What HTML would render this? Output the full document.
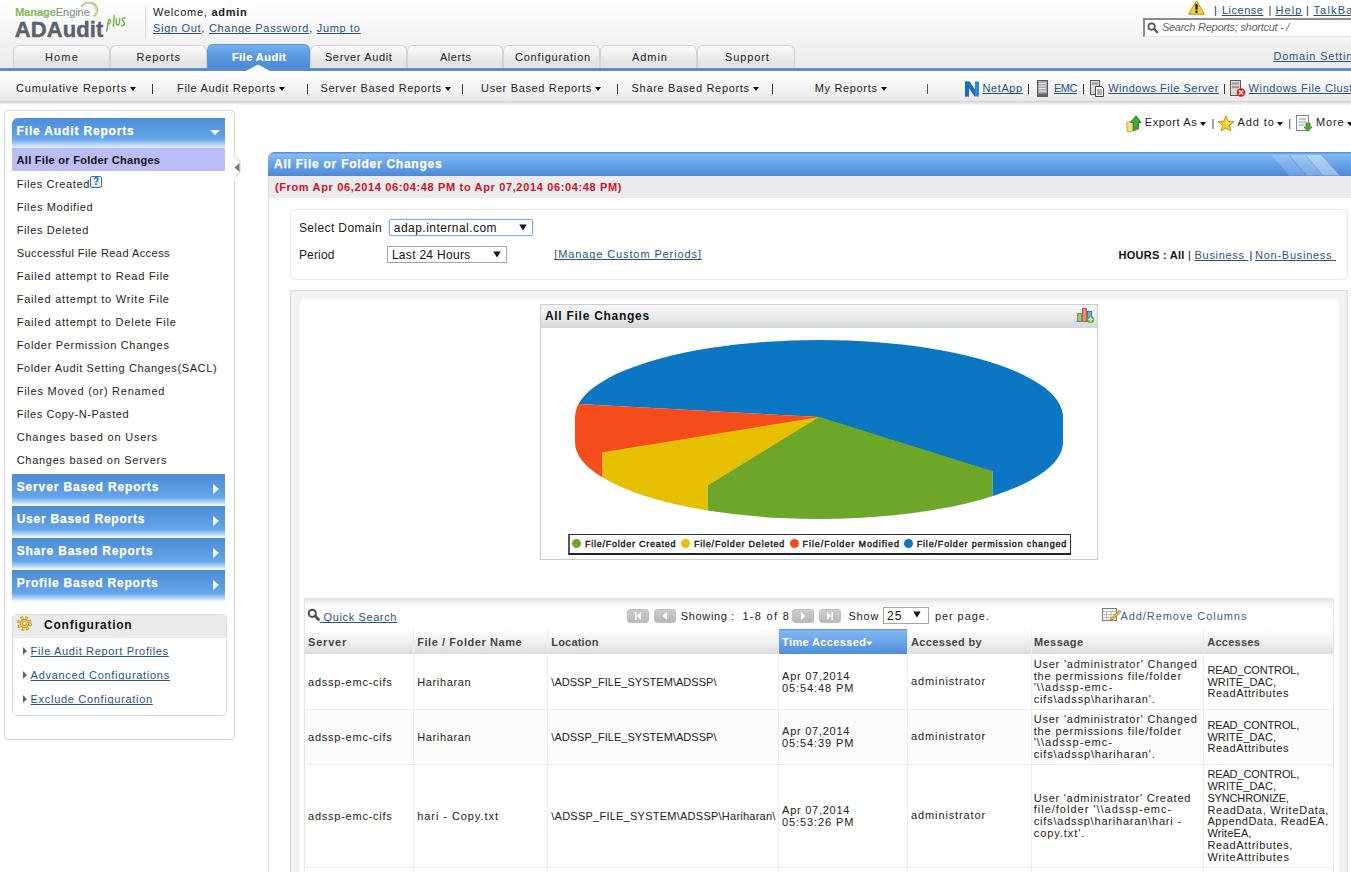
<!DOCTYPE html>
<html><head><meta charset="utf-8"><title>ADAudit Plus</title>
<style>
*{box-sizing:border-box;margin:0;padding:0}
html,body{width:1351px;height:872px;overflow:hidden;background:#fff}
body{font-family:"Liberation Sans",sans-serif;font-size:11px;color:#222;position:relative}
.a{position:absolute}
.t{position:absolute;white-space:nowrap;line-height:1}
.lk{color:#285580;text-decoration:underline;text-decoration-skip-ink:none}
.tab{position:absolute;top:45px;height:23px;border:1px solid #d3d3d3;border-bottom:none;border-radius:6px 6px 0 0;background:linear-gradient(#fafafa,#f0f0f0 35%,#e2e2e2 80%,#e6e6e6)}
.car{position:absolute;width:0;height:0;border-left:3px solid transparent;border-right:3px solid transparent;border-top:4px solid #111}
.sh{position:absolute;left:12px;width:213px;height:32px;background:linear-gradient(#4d8dd7 0%,#5a9adf 45%,#66a5ea 72%,#9cc7f3 84%,#e4f0fc 95%,#fff 100%)}
.rtri{position:absolute;width:0;height:0;border-top:5px solid transparent;border-bottom:5px solid transparent;border-left:6px solid #fff}
.ctri{position:absolute;left:23px;width:0;height:0;border-top:4px solid transparent;border-bottom:4px solid transparent;border-left:4px solid #4a6f93}
.dot{position:absolute;width:9px;height:9px;border-radius:50%}
.pg{position:absolute;top:610px;width:22px;height:13px;border-radius:3px;background:linear-gradient(#cdcdcd,#b9b9b9);border:1px solid #bfbfbf}
.vl{position:absolute;width:1px}
.hl{position:absolute;height:1px}
</style></head><body>
<div class="a" style="left:0;top:0;width:1351px;height:68px;background:linear-gradient(#fff 0%,#fafafa 30%,#f0f0f0 70%,#ececec 100%)"></div>
<svg class="a" style="left:76px;top:0" width="26" height="20"><path d="M5.2 6.8 C9 1.2 19 0.5 21.6 8.6 C22.4 11.5 20.5 14.8 17.6 16.4" fill="none" stroke="#8fc45e" stroke-width="1.2"/><path d="M8.5 3.2 C13 1.6 19.5 3.5 20.2 9.5 C20.5 12 19.5 14 17.5 15.4" fill="none" stroke="#a9d47f" stroke-width=".9"/><path d="M11.5 2.6 C15 2.6 18.6 5 18.8 9" fill="none" stroke="#bfe09c" stroke-width=".8"/></svg>
<div class="t" id="t0" style="left:15.20px;top:7.29px;font-size:11px;color:#8a9299;letter-spacing:-0.058px;-webkit-text-stroke:.15px #8a9299;"><b style="color:#86c24a">Manage</b><span style="color:#8a9299">Engine</span></div>
<div class="t" id="t1" style="left:14.70px;top:18.88px;font-size:22px;color:#58606a;font-weight:bold;letter-spacing:0.103px;-webkit-text-stroke:.4px #58606a;">ADAudit</div>
<svg class="a" style="left:100px;top:10px" width="30" height="24"><g fill="none" stroke="#79b448" stroke-width="1.5" stroke-linecap="round" stroke-linejoin="round"><path d="M6.6 21.4 L8.6 9.6 C10.5 9 11 10.5 10.2 12.8 C9.6 14.2 8.8 14.4 8.2 14.3"/><path d="M14.2 5.3 L13.4 16.4"/><path d="M16.3 8.6 L16.4 14.2 C16.8 15.4 18.8 15.2 19.4 13.8 L19.6 8.4"/><path d="M25 8 C23 7.6 21.6 8.6 22.3 10.4 C23.2 11.8 24.6 12 24.4 14 C24 15.6 22.4 16 21.6 15.4"/></g></svg>
<div class="vl" style="left:145px;top:6px;height:33px;background:#dedede"></div>
<div class="t" id="t2" style="left:153.00px;top:6.89px;font-size:11px;color:#1a1a1a;letter-spacing:0.741px;">Welcome, <b>admin</b></div>
<div class="t" id="t3" style="left:153.00px;top:22.69px;font-size:11px;color:#1a1a1a;letter-spacing:0.694px;"><u class="lk">Sign Out</u>, <u class="lk">Change Password</u>, <u class="lk">Jump to</u></div>
<svg class="a" style="left:1188px;top:0" width="17" height="15"><path d="M8.5 0.8 L16.4 14.2 L0.6 14.2 Z" fill="#f6d52a" stroke="#b5950f" stroke-width="1" stroke-linejoin="round"/><path d="M8.5 4.2 V9.6" stroke="#111" stroke-width="2.2"/><rect x="7.4" y="10.6" width="2.2" height="2.2" fill="#111"/></svg>
<div class="t" id="t4" style="left:1213.90px;top:5.09px;font-size:11px;color:#333;">|</div>
<div class="t" id="t5" style="left:1221.90px;top:5.09px;font-size:11px;color:#222;letter-spacing:0.530px;"><u class="lk">License</u></div>
<div class="t" id="t6" style="left:1268.40px;top:5.09px;font-size:11px;color:#333;">|</div>
<div class="t" id="t7" style="left:1275.40px;top:5.09px;font-size:11px;color:#222;letter-spacing:1.125px;"><u class="lk">Help</u></div>
<div class="t" id="t8" style="left:1305.90px;top:5.09px;font-size:11px;color:#333;">|</div>
<div class="t" id="t9" style="left:1313.40px;top:5.09px;font-size:11px;color:#222;letter-spacing:1.194px;"><u class="lk">TalkBa</u></div>
<div class="a" style="left:1143px;top:18px;width:230px;height:19px;background:#fff;border-top:2px solid #8c8c8c;border-left:2px solid #8c8c8c;border-bottom:1px solid #e4e4e4"></div>
<svg class="a" style="left:1147px;top:22px" width="12" height="12"><circle cx="4.6" cy="4.6" r="3.2" fill="none" stroke="#555" stroke-width="1.7"/><path d="M7 7 L10.2 10.2" stroke="#555" stroke-width="2.3" stroke-linecap="round"/></svg>
<div class="t" id="t10" style="left:1161.90px;top:22.19px;font-size:11px;color:#666;font-style:italic;letter-spacing:-0.259px;">Search Reports; shortcut - /</div>
<div class="t" id="t11" style="left:1273.40px;top:51.19px;font-size:11px;color:#222;letter-spacing:0.826px;"><u class="lk">Domain Settin</u></div>
<div class="tab" style="left:13px;width:97px"></div>
<div class="t" id="t12" style="left:45.00px;top:51.69px;font-size:11px;color:#222;letter-spacing:1.152px;">Home</div>
<div class="tab" style="left:110px;width:97px"></div>
<div class="t" id="t13" style="left:136.40px;top:51.69px;font-size:11px;color:#222;letter-spacing:0.845px;">Reports</div>
<div class="tab" style="left:207px;top:44px;height:24px;width:103px;border-color:#5b97dd;background:linear-gradient(#7ab0f0,#5e9be3 40%,#4a88d5)"></div>
<div class="t" id="t14" style="left:231.90px;top:51.69px;font-size:11px;color:#fff;font-weight:bold;letter-spacing:0.477px;-webkit-text-stroke:.2px #fff;">File Audit</div>
<div class="tab" style="left:310px;width:97px"></div>
<div class="t" id="t15" style="left:324.90px;top:51.69px;font-size:11px;color:#222;letter-spacing:0.643px;">Server Audit</div>
<div class="tab" style="left:407px;width:96px"></div>
<div class="t" id="t16" style="left:439.90px;top:51.69px;font-size:11px;color:#222;letter-spacing:0.575px;">Alerts</div>
<div class="tab" style="left:503px;width:97px"></div>
<div class="t" id="t17" style="left:514.90px;top:51.69px;font-size:11px;color:#222;letter-spacing:0.822px;">Configuration</div>
<div class="tab" style="left:600px;width:97px"></div>
<div class="t" id="t18" style="left:632.00px;top:51.69px;font-size:11px;color:#222;letter-spacing:0.928px;">Admin</div>
<div class="tab" style="left:697px;width:98px"></div>
<div class="t" id="t19" style="left:725.00px;top:51.69px;font-size:11px;color:#222;letter-spacing:0.878px;">Support</div>
<div class="a" style="left:0;top:68px;width:1351px;height:3px;background:#5a8ec5"></div>
<div class="a" style="left:0;top:71px;width:1351px;height:30px;background:linear-gradient(#fff,#f7f7f7 40%,#ededed 85%,#e6e6e6)"></div>
<svg class="a" style="left:246px;top:63px" width="24" height="9"><path d="M0 8 L12 1.5 L24 8 Z" fill="#fff"/></svg>
<div class="a" style="left:0;top:101px;width:1351px;height:4px;background:linear-gradient(#cfcfcf,#e6e6e6 50%,#fafafa)"></div>
<div class="t" id="t20" style="left:16.00px;top:82.69px;font-size:11px;color:#222;letter-spacing:0.800px;">Cumulative Reports</div>
<div class="car" style="left:130.0px;top:87px;border-top-color:#111"></div>
<div class="t" id="t21" style="left:177.00px;top:82.69px;font-size:11px;color:#222;letter-spacing:0.669px;">File Audit Reports</div>
<div class="car" style="left:279.0px;top:87px;border-top-color:#111"></div>
<div class="t" id="t22" style="left:320.40px;top:82.69px;font-size:11px;color:#222;letter-spacing:0.657px;">Server Based Reports</div>
<div class="car" style="left:445.0px;top:87px;border-top-color:#111"></div>
<div class="t" id="t23" style="left:481.10px;top:82.69px;font-size:11px;color:#222;letter-spacing:0.656px;">User Based Reports</div>
<div class="car" style="left:595.3px;top:87px;border-top-color:#111"></div>
<div class="t" id="t24" style="left:631.60px;top:82.69px;font-size:11px;color:#222;letter-spacing:0.685px;">Share Based Reports</div>
<div class="car" style="left:753.0px;top:87px;border-top-color:#111"></div>
<div class="t" id="t25" style="left:814.80px;top:82.69px;font-size:11px;color:#222;letter-spacing:0.650px;">My Reports</div>
<div class="car" style="left:881.0px;top:87px;border-top-color:#111"></div>
<div class="vl" style="left:152px;top:84px;height:10px;background:#333"></div>
<div class="vl" style="left:307px;top:84px;height:10px;background:#333"></div>
<div class="vl" style="left:462px;top:84px;height:10px;background:#333"></div>
<div class="vl" style="left:617px;top:84px;height:10px;background:#333"></div>
<div class="vl" style="left:772px;top:84px;height:10px;background:#333"></div>
<div class="vl" style="left:927px;top:84px;height:10px;background:#555"></div>
<div class="vl" style="left:1028px;top:84px;height:10px;background:#333"></div>
<div class="vl" style="left:1083px;top:84px;height:10px;background:#333"></div>
<div class="vl" style="left:1224px;top:84px;height:10px;background:#333"></div>
<div class="t" id="t26" style="left:982.60px;top:82.69px;font-size:11px;color:#222;letter-spacing:0.579px;"><u class="lk">NetApp</u></div>
<div class="t" id="t27" style="left:1053.90px;top:82.69px;font-size:11px;color:#222;letter-spacing:-0.477px;"><u class="lk">EMC</u></div>
<div class="t" id="t28" style="left:1108.20px;top:82.69px;font-size:11px;color:#222;letter-spacing:0.519px;"><u class="lk">Windows File Server</u></div>
<div class="t" id="t29" style="left:1248.60px;top:82.69px;font-size:11px;color:#222;letter-spacing:0.604px;"><u class="lk">Windows File Clust</u></div>
<svg class="a" style="left:964px;top:81px" width="16" height="16"><path d="M1 15.5 V0.5 H5.5 L11 9 V0.5 H15 V15.5 H10.5 L5 7 V15.5 Z" fill="#2a8ad8"/><path d="M1 0.5 H5.5 L11 9 V15.5 L5 7 V15.5 H1Z" fill="#0b56a5" opacity=".55"/></svg>
<svg class="a" style="left:1036px;top:80px" width="13" height="17"><rect x="1.5" y=".5" width="10" height="16" fill="#a8a8a8" stroke="#555"/><path d="M3 3.5h7M3 6h7M3 8.5h7M3 11h7" stroke="#eee" stroke-width="1"/><rect x="1.5" y="13.5" width="10" height="3" fill="#666"/></svg>
<svg class="a" style="left:1089px;top:80px" width="16" height="17"><rect x="1.5" y=".5" width="9" height="14" fill="#d8d8d8" stroke="#5a5a5a"/><rect x="3" y="2.5" width="6" height="2" fill="#999"/><path d="M6.5 6.5 h6 l2 2 v8 h-8z" fill="#fff" stroke="#444"/><path d="M8 10h5M8 12h5M8 14h5" stroke="#666"/></svg>
<svg class="a" style="left:1229px;top:80px" width="17" height="17"><rect x="1.5" y=".5" width="10" height="15" fill="#d8d8d8" stroke="#5a5a5a"/><rect x="3" y="2.5" width="7" height="2" fill="#999"/><rect x="3" y="6" width="7" height="2" fill="#999"/><circle cx="12" cy="12.5" r="4.3" fill="#e0221e"/><path d="M10 10.5 L14 14.5 M14 10.5 L10 14.5" stroke="#fff" stroke-width="1.3"/></svg>
<div class="a" style="left:4px;top:110px;width:231px;height:630px;border:1px solid #d6d6d6;border-radius:4px;background:#fff"></div>
<div class="sh" style="top:118px;height:30px;border-radius:6px 0 0 0;background:linear-gradient(#4f8fd9 0%,#5a9adf 45%,#68a7eb 70%,#a5ccf4 85%,#e8f2fc 100%)"></div>
<div class="t" id="t30" style="left:16.60px;top:124.84px;font-size:12px;color:#fff;font-weight:bold;letter-spacing:0.842px;-webkit-text-stroke:.25px #fff;">File Audit Reports</div>
<div class="a" style="left:210px;top:130px;width:0;height:0;border-left:5px solid transparent;border-right:5px solid transparent;border-top:5px solid #fff"></div>
<div class="a" style="left:12px;top:148px;width:213px;height:23px;background:#bcbcf6"></div>
<div class="t" id="t31" style="left:16.60px;top:154.69px;font-size:11px;color:#111;font-weight:bold;letter-spacing:0.280px;">All File or Folder Changes</div>
<div class="t" id="t32" style="left:16.70px;top:178.69px;font-size:11px;color:#1e1e1e;letter-spacing:0.598px;">Files Created</div>
<div class="t" id="t33" style="left:16.70px;top:201.69px;font-size:11px;color:#1e1e1e;letter-spacing:0.626px;">Files Modified</div>
<div class="t" id="t34" style="left:16.70px;top:224.69px;font-size:11px;color:#1e1e1e;letter-spacing:0.625px;">Files Deleted</div>
<div class="t" id="t35" style="left:16.70px;top:247.69px;font-size:11px;color:#1e1e1e;letter-spacing:0.449px;">Successful File Read Access</div>
<div class="t" id="t36" style="left:16.70px;top:270.69px;font-size:11px;color:#1e1e1e;letter-spacing:0.778px;">Failed attempt to Read File</div>
<div class="t" id="t37" style="left:16.70px;top:293.69px;font-size:11px;color:#1e1e1e;letter-spacing:0.780px;">Failed attempt to Write File</div>
<div class="t" id="t38" style="left:16.70px;top:316.69px;font-size:11px;color:#1e1e1e;letter-spacing:0.772px;">Failed attempt to Delete File</div>
<div class="t" id="t39" style="left:16.70px;top:339.69px;font-size:11px;color:#1e1e1e;letter-spacing:0.686px;">Folder Permission Changes</div>
<div class="t" id="t40" style="left:16.70px;top:362.69px;font-size:11px;color:#1e1e1e;letter-spacing:0.629px;">Folder Audit Setting Changes(SACL)</div>
<div class="t" id="t41" style="left:16.70px;top:385.69px;font-size:11px;color:#1e1e1e;letter-spacing:0.760px;">Files Moved (or) Renamed</div>
<div class="t" id="t42" style="left:16.70px;top:408.69px;font-size:11px;color:#1e1e1e;letter-spacing:0.579px;">Files Copy-N-Pasted</div>
<div class="t" id="t43" style="left:16.70px;top:431.69px;font-size:11px;color:#1e1e1e;letter-spacing:0.769px;">Changes based on Users</div>
<div class="t" id="t44" style="left:16.70px;top:454.69px;font-size:11px;color:#1e1e1e;letter-spacing:0.717px;">Changes based on Servers</div>
<div class="a" style="left:90px;top:176px;width:12px;height:12px;border:1px solid #3570ad;border-radius:2px;background:linear-gradient(#fff,#dce9f8)"></div>
<div class="a" style="left:93px;top:177px;font-size:10px;font-weight:bold;color:#275d95;line-height:1">?</div>
<svg class="a" style="left:230px;top:154px" width="14" height="28"><path d="M4.5 0 L4.5 2 L10 8 L10 18 L4.5 24 L4.5 28" fill="#fff" stroke="#d0d0d0" stroke-width="1"/><path d="M4 0 L4 28" stroke="#fff" stroke-width="1.2"/><path d="M9.5 9 L4.5 13.5 L9.5 18 Z" fill="#7a7a7a"/></svg>
<div class="sh" style="top:474px"></div>
<div class="t" id="t45" style="left:16.70px;top:480.84px;font-size:12px;color:#fff;font-weight:bold;letter-spacing:0.858px;-webkit-text-stroke:.25px #fff;">Server Based Reports</div>
<div class="rtri" style="left:213px;top:484px"></div>
<div class="sh" style="top:506px"></div>
<div class="t" id="t46" style="left:16.70px;top:512.84px;font-size:12px;color:#fff;font-weight:bold;letter-spacing:0.764px;-webkit-text-stroke:.25px #fff;">User Based Reports</div>
<div class="rtri" style="left:213px;top:516px"></div>
<div class="sh" style="top:538px"></div>
<div class="t" id="t47" style="left:16.70px;top:544.84px;font-size:12px;color:#fff;font-weight:bold;letter-spacing:0.801px;-webkit-text-stroke:.25px #fff;">Share Based Reports</div>
<div class="rtri" style="left:213px;top:548px"></div>
<div class="sh" style="top:570px"></div>
<div class="t" id="t48" style="left:16.70px;top:576.84px;font-size:12px;color:#fff;font-weight:bold;letter-spacing:0.776px;-webkit-text-stroke:.25px #fff;">Profile Based Reports</div>
<div class="rtri" style="left:213px;top:580px"></div>
<div class="a" style="left:12px;top:614px;width:215px;height:102px;border:1px solid #dadada;border-radius:5px;background:#fff"></div>
<div class="a" style="left:13px;top:615px;width:213px;height:23px;border-radius:4px 4px 0 0;background:#ebebeb"></div>
<svg class="a" style="left:17px;top:616px" width="15" height="15"><circle cx="7.5" cy="7.5" r="5.3" fill="none" stroke="#b8891c" stroke-width="4" stroke-dasharray="2.4 1.76"/><circle cx="7.5" cy="7.5" r="5.3" fill="none" stroke="#f4c94e" stroke-width="2.6" stroke-dasharray="1.6 2.56" stroke-dashoffset="-.4"/><circle cx="7.5" cy="7.5" r="4.2" fill="#f4c94e" stroke="#b8891c" stroke-width=".8"/><circle cx="7.5" cy="7.5" r="2" fill="#fff" stroke="#b8891c" stroke-width=".8"/></svg>
<div class="t" id="t49" style="left:44.10px;top:619.04px;font-size:12px;color:#111;font-weight:bold;letter-spacing:0.745px;">Configuration</div>
<div class="ctri" style="top:647px"></div>
<div class="t" id="t50" style="left:30.60px;top:645.69px;font-size:11px;color:#222;letter-spacing:0.657px;"><u class="lk">File Audit Report Profiles</u></div>
<div class="ctri" style="top:671px"></div>
<div class="t" id="t51" style="left:30.60px;top:669.69px;font-size:11px;color:#222;letter-spacing:0.713px;"><u class="lk">Advanced Configurations</u></div>
<div class="ctri" style="top:695px"></div>
<div class="t" id="t52" style="left:30.60px;top:693.69px;font-size:11px;color:#222;letter-spacing:0.694px;"><u class="lk">Exclude Configuration</u></div>
<svg class="a" style="left:1125px;top:114px" width="18" height="19"><path d="M1.5 8.5 L9 6.5 L10 16.5 L2.5 18 Z" fill="#f1e07e" stroke="#b59e3a" stroke-width=".8"/><path d="M8.2 16.5 L8.2 8.5 L5.6 8.5 L11 1.8 L16.2 8.5 L13.6 8.5 L13.6 15 Z" fill="#3ea83a" stroke="#1e6e1e" stroke-width=".8"/></svg>
<div class="t" id="t53" style="left:1144.70px;top:117.49px;font-size:11px;color:#222;letter-spacing:0.628px;">Export As</div>
<div class="car" style="left:1200.0px;top:122px;border-top-color:#111"></div>
<div class="t" id="t54" style="left:1211.60px;top:117.69px;font-size:11px;color:#333;">|</div>
<svg class="a" style="left:1217px;top:115px" width="18" height="17"><path d="M9 1 L11.2 6.2 L16.8 6.7 L12.5 10.4 L13.8 15.9 L9 13 L4.2 15.9 L5.5 10.4 L1.2 6.7 L6.8 6.2 Z" fill="#f6cf2c" stroke="#d08a10" stroke-width="1"/><path d="M9 4 L10.3 7.6 L13.5 8 L11 10 L11.5 12 L9 10.8Z" fill="#fff3a0" opacity=".7"/></svg>
<div class="t" id="t55" style="left:1237.40px;top:117.49px;font-size:11px;color:#222;letter-spacing:0.938px;">Add to</div>
<div class="car" style="left:1277.0px;top:122px;border-top-color:#111"></div>
<div class="t" id="t56" style="left:1288.20px;top:117.69px;font-size:11px;color:#333;">|</div>
<svg class="a" style="left:1295px;top:114px" width="18" height="19"><rect x="1.5" y="1.5" width="12" height="15" fill="#f8f8f8" stroke="#888"/><path d="M4 5h7M4 8h7M4 11h5" stroke="#999"/><path d="M11 9 h4 v4 h2 l-4 4.5 l-4 -4.5 h2 z" fill="#4caf3a" stroke="#2e7d22" stroke-width=".7"/></svg>
<div class="t" id="t57" style="left:1316.00px;top:117.49px;font-size:11px;color:#222;letter-spacing:0.879px;">More</div>
<div class="car" style="left:1347.0px;top:122px;border-top-color:#111"></div>
<div class="vl" style="left:268px;top:176px;height:700px;background:#e0e0e0"></div>
<div class="a" style="left:268px;top:152px;width:1090px;height:24px;border-radius:6px 0 0 0;background:linear-gradient(#5a8fd6 0,#5a8fd6 1px,#86bbf3 2px,#6aa5ea 45%,#4c89d5)"></div>
<svg class="a" style="left:1260px;top:152px" width="91" height="24"><path d="M11.8 3 L29 3 L46.5 23.6 L29.3 23.6 Z" fill="#fff" opacity=".17"/><path d="M29 3 L45.5 3 L62.8 23.6 L46.5 23.6 Z" fill="#fff" opacity=".26"/><path d="M45.5 3 L61.5 3 L80 23.6 L62.8 23.6 Z" fill="#fff" opacity=".42"/><path d="M29 3 L46.5 23.6 M45.5 3 L62.8 23.6 M61.5 3 L80 23.6" stroke="#3f77c2" stroke-width=".8" opacity=".45"/></svg>
<div class="t" id="t58" style="left:274.10px;top:157.84px;font-size:12px;color:#fff;font-weight:bold;letter-spacing:0.752px;-webkit-text-stroke:.25px #fff;">All File or Folder Changes</div>
<div class="a" style="left:269px;top:176px;width:1090px;height:22px;background:#ebebf0"></div>
<div class="t" id="t59" style="left:274.90px;top:181.69px;font-size:11px;color:#d0121d;font-weight:bold;letter-spacing:0.647px;">(From Apr 06,2014 06:04:48 PM to Apr 07,2014 06:04:48 PM)</div>
<div class="a" style="left:290px;top:209px;width:1058px;height:71px;border:1px solid #e8e8e8;border-radius:5px;background:#fff"></div>
<div class="t" id="t60" style="left:298.90px;top:221.84px;font-size:12px;color:#222;letter-spacing:0.396px;">Select Domain</div>
<div class="a" style="left:389px;top:219px;width:144px;height:17px;border:1px solid #7aaee6;border-radius:2px;background:#fff;box-shadow:0 0 2px #a8cff5"></div>
<div class="t" id="t61" style="left:393.80px;top:221.84px;font-size:12px;color:#111;letter-spacing:0.463px;">adap.internal.com</div>
<svg class="a" style="left:519px;top:224px" width="8" height="7"><path d="M0.3 0.5 H7.7 L4 6.5Z" fill="#111"/></svg>
<div class="t" id="t62" style="left:298.90px;top:248.84px;font-size:12px;color:#222;letter-spacing:0.163px;">Period</div>
<div class="a" style="left:387px;top:246px;width:120px;height:17px;border:1px solid #a6a6a6;background:#fff"></div>
<div class="t" id="t63" style="left:391.90px;top:248.84px;font-size:12px;color:#111;letter-spacing:0.298px;">Last 24 Hours</div>
<svg class="a" style="left:493px;top:251px" width="8" height="7"><path d="M0.3 0.5 H7.7 L4 6.5Z" fill="#111"/></svg>
<div class="t" id="t64" style="left:554.20px;top:249.19px;font-size:11px;color:#222;letter-spacing:0.892px;"><u class="lk">[Manage Custom Periods]</u></div>
<div class="t" id="t65" style="left:1118.60px;top:250.29px;font-size:11px;color:#111;font-weight:bold;letter-spacing:0.254px;">HOURS : All</div>
<div class="t" id="t66" style="left:1187.90px;top:250.29px;font-size:11px;color:#111;">|</div>
<div class="t" id="t67" style="left:1194.60px;top:250.29px;font-size:11px;color:#222;letter-spacing:0.687px;"><u class="lk">Business&nbsp;</u></div>
<div class="t" id="t68" style="left:1249.40px;top:250.29px;font-size:11px;color:#111;">|</div>
<div class="t" id="t69" style="left:1255.10px;top:250.29px;font-size:11px;color:#222;letter-spacing:0.729px;"><u class="lk">Non-Business&nbsp;</u></div>
<div class="a" style="left:290px;top:290px;width:1058px;height:600px;border:1px solid #dadada;border-bottom:none;background:#f2f2f3"></div>
<div class="a" style="left:299px;top:298px;width:1041px;height:600px;border:1px solid #f4f4f4;border-radius:6px;background:#fff"></div>
<div class="a" style="left:540px;top:304px;width:558px;height:256px;border:1px solid #cdcdcd;background:#fff"></div>
<div class="a" style="left:541px;top:305px;width:556px;height:23px;background:linear-gradient(#f7f7f9,#e8eaed 55%,#d3d6db)"></div>
<div class="t" id="t70" style="left:544.90px;top:309.84px;font-size:12px;color:#111;font-weight:bold;letter-spacing:0.729px;">All File Changes</div>
<svg class="a" style="left:1075px;top:306px" width="20" height="18"><rect x="2.5" y="7.5" width="4" height="8" fill="#9acb6a" stroke="#5a8a30" stroke-width=".8"/><rect x="7.5" y="2.5" width="4" height="13" fill="#f28a7a" stroke="#b04030" stroke-width=".8"/><rect x="12.5" y="5.5" width="4" height="10" fill="#7aa8e4" stroke="#3060a0" stroke-width=".8"/><path d="M1 15.5 H18" stroke="#777" stroke-width=".8"/><circle cx="15.5" cy="13.5" r="3.6" fill="#56b040"/><path d="M13.3 13.5h4.4M15.5 11.3v4.4" stroke="#fff" stroke-width="1.3"/></svg>
<svg class="a" style="left:0;top:0" width="1351" height="872"><path fill="#0b76c1" d="M819 417 L1063.00 417.00 L1063.00 442.00 A244 77 0 0 1 992.44 496.16 L992.44 471.16 Z"/>
<path fill="#6ea62a" d="M819 417 L992.44 471.16 L992.44 496.16 A244 77 0 0 1 707.47 510.49 L707.47 485.49 Z"/>
<path fill="#e6bf00" d="M819 417 L707.47 485.49 L707.47 510.49 A244 77 0 0 1 602.18 477.32 L602.18 452.32 Z"/>
<path fill="#f44d1b" d="M819 417 L602.18 452.32 L602.18 477.32 A244 77 0 0 1 575.00 442.00 L575.00 417.00 Z"/>
<path fill="#0b76c1" d="M819 417 L578.49 404.03 A244 77 0 1 1 992.44 471.16 Z"/>
<path fill="#6ea62a" d="M819 417 L992.44 471.16 A244 77 0 0 1 707.47 485.49 Z"/>
<path fill="#e6bf00" d="M819 417 L707.47 485.49 A244 77 0 0 1 602.18 452.32 Z"/>
<path fill="#f44d1b" d="M819 417 L602.18 452.32 A244 77 0 0 1 578.49 404.03 Z"/></svg>
<div class="a" style="left:568px;top:534px;width:503px;height:21px;border:1px solid #333;border-left:2px solid #555;border-bottom:2px solid #222;background:#fff"></div>
<div class="dot" style="left:572px;top:539px;background:#6ea62a"></div>
<div class="t" id="t71" style="left:585.00px;top:540.38px;font-size:9px;color:#111;letter-spacing:0.742px;-webkit-text-stroke:.35px #111;">File/Folder Created</div>
<div class="dot" style="left:681px;top:539px;background:#e6bf00"></div>
<div class="t" id="t72" style="left:693.90px;top:540.38px;font-size:9px;color:#111;letter-spacing:0.803px;-webkit-text-stroke:.35px #111;">File/Folder Deleted</div>
<div class="dot" style="left:790px;top:539px;background:#f44d1b"></div>
<div class="t" id="t73" style="left:802.60px;top:540.38px;font-size:9px;color:#111;letter-spacing:0.909px;-webkit-text-stroke:.35px #111;">File/Folder Modified</div>
<div class="dot" style="left:904px;top:539px;background:#0b76c1"></div>
<div class="t" id="t74" style="left:916.70px;top:540.38px;font-size:9px;color:#111;letter-spacing:0.832px;-webkit-text-stroke:.35px #111;">File/Folder permission changed</div>
<div class="a" style="left:304px;top:598px;width:1030px;height:32px;border-left:1px solid #e4e4e4;border-right:1px solid #e4e4e4;background:linear-gradient(#dedede,#f3f3f3 5px,#fff 11px)"></div>
<svg class="a" style="left:307px;top:608px" width="14" height="14"><circle cx="5.3" cy="5.3" r="3.6" fill="none" stroke="#4d4d4d" stroke-width="2"/><path d="M8 8 L11.5 11.5" stroke="#4d4d4d" stroke-width="2.8" stroke-linecap="round"/></svg>
<div class="t" id="t75" style="left:319.90px;top:611.69px;font-size:11px;color:#222;letter-spacing:0.617px;"><u class="lk">&nbsp;Quick Search</u></div>
<div class="pg" style="left:627px;top:609px;width:22px;height:14px"></div>
<svg class="a" style="left:627px;top:611px" width="22" height="10"><rect x="8" y="1" width="1.6" height="8" fill="#fff"/><path d="M14 1 L10 5 L14 9Z" fill="#fff"/></svg>
<div class="pg" style="left:654px;top:609px;width:22px;height:14px"></div>
<svg class="a" style="left:654px;top:611px" width="22" height="10"><path d="M13 1 L8.5 5 L13 9Z" fill="#fff"/></svg>
<div class="pg" style="left:792px;top:609px;width:22px;height:14px"></div>
<svg class="a" style="left:792px;top:611px" width="22" height="10"><path d="M9 1 L13.5 5 L9 9Z" fill="#fff"/></svg>
<div class="pg" style="left:819px;top:609px;width:22px;height:14px"></div>
<svg class="a" style="left:819px;top:611px" width="22" height="10"><path d="M8 1 L12 5 L8 9Z" fill="#fff"/><rect x="12.4" y="1" width="1.6" height="8" fill="#fff"/></svg>
<div class="t" id="t76" style="left:680.70px;top:610.69px;font-size:11px;color:#222;letter-spacing:0.673px;">Showing :</div>
<div class="t" id="t77" style="left:742.40px;top:610.69px;font-size:11px;color:#222;letter-spacing:1.312px;">1-8 of 8</div>
<div class="t" id="t78" style="left:848.40px;top:610.69px;font-size:11px;color:#222;letter-spacing:0.823px;">Show</div>
<div class="a" style="left:883px;top:607px;width:46px;height:17px;border:1px solid #a6a6a6;background:#fff"></div>
<div class="t" id="t79" style="left:886.90px;top:609.84px;font-size:12px;color:#111;letter-spacing:1.141px;">25</div>
<svg class="a" style="left:913px;top:611px" width="8" height="7"><path d="M0.3 0.5 H7.7 L4 6.5Z" fill="#111"/></svg>
<div class="t" id="t80" style="left:934.90px;top:610.69px;font-size:11px;color:#222;letter-spacing:0.939px;">per page.</div>
<svg class="a" style="left:1101px;top:607px" width="21" height="15"><rect x="1.5" y="1.5" width="14" height="12" fill="#f6f6f6" stroke="#7a7a7a"/><path d="M1.5 4.5h14M5.5 4.5v9M10 4.5v9M1.5 7.5h14M1.5 10.5h14" stroke="#b5b5b5" stroke-width=".8"/><path d="M10 11.5 L18.5 3 L20 4.5 L11.5 13 L9.3 13.7 Z" fill="#f2c23e" stroke="#a07010" stroke-width=".8"/></svg>
<div class="t" id="t81" style="left:1120.40px;top:611.19px;font-size:11px;color:#33658f;letter-spacing:0.938px;">Add/Remove Columns</div>
<div class="a" style="left:304px;top:629px;width:1030px;height:25px;background:linear-gradient(#fefefe,#f3f3f3 45%,#dcdcdc)"></div>
<div class="a" style="left:779px;top:629px;width:128px;height:25px;background:linear-gradient(#5a94dc 0px,#80b6f1 2px,#6aa4e8 50%,#4f8dd8)"></div>
<div class="a" style="left:304px;top:709px;width:1030px;height:55px;background:#fbfbfb"></div>
<div class="vl" style="left:413px;top:629px;height:260px;background:#eaedf2"></div>
<div class="vl" style="left:547px;top:629px;height:260px;background:#eaedf2"></div>
<div class="vl" style="left:778px;top:629px;height:260px;background:#eaedf2"></div>
<div class="vl" style="left:907px;top:629px;height:260px;background:#eaedf2"></div>
<div class="vl" style="left:1031px;top:629px;height:260px;background:#eaedf2"></div>
<div class="vl" style="left:1203px;top:629px;height:260px;background:#eaedf2"></div>
<div class="vl" style="left:304px;top:629px;height:260px;background:#e4e4e4"></div>
<div class="vl" style="left:1333px;top:629px;height:260px;background:#e4e4e4"></div>
<div class="hl" style="left:304px;top:709px;width:1030px;background:#eaeef3"></div>
<div class="hl" style="left:304px;top:764px;width:1030px;background:#eaeef3"></div>
<div class="hl" style="left:304px;top:867px;width:1030px;background:#eaeef3"></div>
<div class="t" id="t82" style="left:308.10px;top:637.09px;font-size:11px;color:#464646;font-weight:bold;letter-spacing:0.767px;">Server</div>
<div class="t" id="t83" style="left:417.20px;top:637.09px;font-size:11px;color:#464646;font-weight:bold;letter-spacing:0.574px;">File / Folder Name</div>
<div class="t" id="t84" style="left:551.30px;top:637.09px;font-size:11px;color:#464646;font-weight:bold;letter-spacing:0.194px;">Location</div>
<div class="t" id="t85" style="left:911.00px;top:637.09px;font-size:11px;color:#464646;font-weight:bold;letter-spacing:0.343px;">Accessed by</div>
<div class="t" id="t86" style="left:1033.90px;top:637.09px;font-size:11px;color:#464646;font-weight:bold;letter-spacing:0.453px;">Message</div>
<div class="t" id="t87" style="left:1207.20px;top:637.09px;font-size:11px;color:#464646;font-weight:bold;letter-spacing:0.274px;">Accesses</div>
<div class="t" id="t88" style="left:782.10px;top:637.09px;font-size:11px;color:#fff;font-weight:bold;letter-spacing:0.358px;">Time Accessed</div>
<svg class="a" style="left:866px;top:641px" width="7" height="5"><path d="M0 0.5 H6.5 L3.25 4.5Z" fill="#fff"/></svg>
<div class="t" id="t89" style="left:308.10px;top:676.89px;font-size:11px;color:#222;letter-spacing:0.749px;">adssp-emc-cifs</div>
<div class="t" id="t90" style="left:417.20px;top:676.89px;font-size:11px;color:#222;letter-spacing:0.648px;">Hariharan</div>
<div class="t" id="t91" style="left:551.30px;top:676.89px;font-size:11px;color:#222;letter-spacing:0.031px;">\ADSSP_FILE_SYSTEM\ADSSP\</div>
<div class="t" id="t92" style="left:911.00px;top:676.49px;font-size:11px;color:#222;letter-spacing:0.885px;">administrator</div>
<div class="t" id="t93" style="left:782.10px;top:671.09px;font-size:11px;color:#222;letter-spacing:0.736px;">Apr 07,2014</div>
<div class="t" id="t94" style="left:782.10px;top:682.79px;font-size:11px;color:#222;letter-spacing:0.892px;">05:54:48 PM</div>
<div class="t" id="t95" style="left:1033.70px;top:658.89px;font-size:11px;color:#222;letter-spacing:0.790px;">User &#x27;administrator&#x27; Changed</div>
<div class="t" id="t96" style="left:1033.70px;top:670.64px;font-size:11px;color:#222;letter-spacing:0.872px;">the permissions file/folder</div>
<div class="t" id="t97" style="left:1033.70px;top:682.39px;font-size:11px;color:#222;letter-spacing:1.059px;">&#x27;\\adssp-emc-</div>
<div class="t" id="t98" style="left:1033.70px;top:694.14px;font-size:11px;color:#222;letter-spacing:0.833px;">cifs\adssp\hariharan&#x27;.</div>
<div class="t" id="t99" style="left:1207.40px;top:664.69px;font-size:11px;color:#222;letter-spacing:-0.128px;">READ_CONTROL,</div>
<div class="t" id="t100" style="left:1207.40px;top:676.59px;font-size:11px;color:#222;letter-spacing:0.084px;">WRITE_DAC,</div>
<div class="t" id="t101" style="left:1207.40px;top:688.49px;font-size:11px;color:#222;letter-spacing:0.633px;">ReadAttributes</div>
<div class="t" id="t102" style="left:308.10px;top:731.89px;font-size:11px;color:#222;letter-spacing:0.749px;">adssp-emc-cifs</div>
<div class="t" id="t103" style="left:417.20px;top:731.89px;font-size:11px;color:#222;letter-spacing:0.648px;">Hariharan</div>
<div class="t" id="t104" style="left:551.30px;top:731.89px;font-size:11px;color:#222;letter-spacing:0.031px;">\ADSSP_FILE_SYSTEM\ADSSP\</div>
<div class="t" id="t105" style="left:911.00px;top:731.49px;font-size:11px;color:#222;letter-spacing:0.885px;">administrator</div>
<div class="t" id="t106" style="left:782.10px;top:726.09px;font-size:11px;color:#222;letter-spacing:0.736px;">Apr 07,2014</div>
<div class="t" id="t107" style="left:782.10px;top:737.79px;font-size:11px;color:#222;letter-spacing:0.892px;">05:54:39 PM</div>
<div class="t" id="t108" style="left:1033.70px;top:713.89px;font-size:11px;color:#222;letter-spacing:0.790px;">User &#x27;administrator&#x27; Changed</div>
<div class="t" id="t109" style="left:1033.70px;top:725.64px;font-size:11px;color:#222;letter-spacing:0.872px;">the permissions file/folder</div>
<div class="t" id="t110" style="left:1033.70px;top:737.39px;font-size:11px;color:#222;letter-spacing:1.059px;">&#x27;\\adssp-emc-</div>
<div class="t" id="t111" style="left:1033.70px;top:749.14px;font-size:11px;color:#222;letter-spacing:0.833px;">cifs\adssp\hariharan&#x27;.</div>
<div class="t" id="t112" style="left:1207.40px;top:719.69px;font-size:11px;color:#222;letter-spacing:-0.128px;">READ_CONTROL,</div>
<div class="t" id="t113" style="left:1207.40px;top:731.59px;font-size:11px;color:#222;letter-spacing:0.084px;">WRITE_DAC,</div>
<div class="t" id="t114" style="left:1207.40px;top:743.49px;font-size:11px;color:#222;letter-spacing:0.633px;">ReadAttributes</div>
<div class="t" id="t115" style="left:308.10px;top:810.89px;font-size:11px;color:#222;letter-spacing:0.749px;">adssp-emc-cifs</div>
<div class="t" id="t116" style="left:417.20px;top:810.89px;font-size:11px;color:#222;letter-spacing:0.939px;">hari - Copy.txt</div>
<div class="t" id="t117" style="left:551.30px;top:810.89px;font-size:11px;color:#222;letter-spacing:0.244px;">\ADSSP_FILE_SYSTEM\ADSSP\Hariharan\</div>
<div class="t" id="t118" style="left:911.00px;top:810.49px;font-size:11px;color:#222;letter-spacing:0.885px;">administrator</div>
<div class="t" id="t119" style="left:782.10px;top:805.19px;font-size:11px;color:#222;letter-spacing:0.736px;">Apr 07,2014</div>
<div class="t" id="t120" style="left:782.10px;top:816.89px;font-size:11px;color:#222;letter-spacing:0.892px;">05:53:26 PM</div>
<div class="t" id="t121" style="left:1033.70px;top:792.69px;font-size:11px;color:#222;letter-spacing:0.757px;">User &#x27;administrator&#x27; Created</div>
<div class="t" id="t122" style="left:1033.70px;top:804.44px;font-size:11px;color:#222;letter-spacing:1.001px;">file/folder &#x27;\\adssp-emc-</div>
<div class="t" id="t123" style="left:1033.70px;top:816.19px;font-size:11px;color:#222;letter-spacing:0.801px;">cifs\adssp\hariharan\hari -</div>
<div class="t" id="t124" style="left:1033.70px;top:827.94px;font-size:11px;color:#222;letter-spacing:0.939px;">copy.txt&#x27;.</div>
<div class="t" id="t125" style="left:1207.40px;top:768.89px;font-size:11px;color:#222;letter-spacing:-0.128px;">READ_CONTROL,</div>
<div class="t" id="t126" style="left:1207.40px;top:780.79px;font-size:11px;color:#222;letter-spacing:0.084px;">WRITE_DAC,</div>
<div class="t" id="t127" style="left:1207.40px;top:792.69px;font-size:11px;color:#222;letter-spacing:-0.148px;">SYNCHRONIZE,</div>
<div class="t" id="t128" style="left:1207.40px;top:804.59px;font-size:11px;color:#222;letter-spacing:0.715px;">ReadData, WriteData,</div>
<div class="t" id="t129" style="left:1207.40px;top:816.49px;font-size:11px;color:#222;letter-spacing:0.516px;">AppendData, ReadEA,</div>
<div class="t" id="t130" style="left:1207.40px;top:828.39px;font-size:11px;color:#222;letter-spacing:0.114px;">WriteEA,</div>
<div class="t" id="t131" style="left:1207.40px;top:840.29px;font-size:11px;color:#222;letter-spacing:0.655px;">ReadAttributes,</div>
<div class="t" id="t132" style="left:1207.40px;top:852.19px;font-size:11px;color:#222;letter-spacing:0.683px;">WriteAttributes</div>
</body></html>
